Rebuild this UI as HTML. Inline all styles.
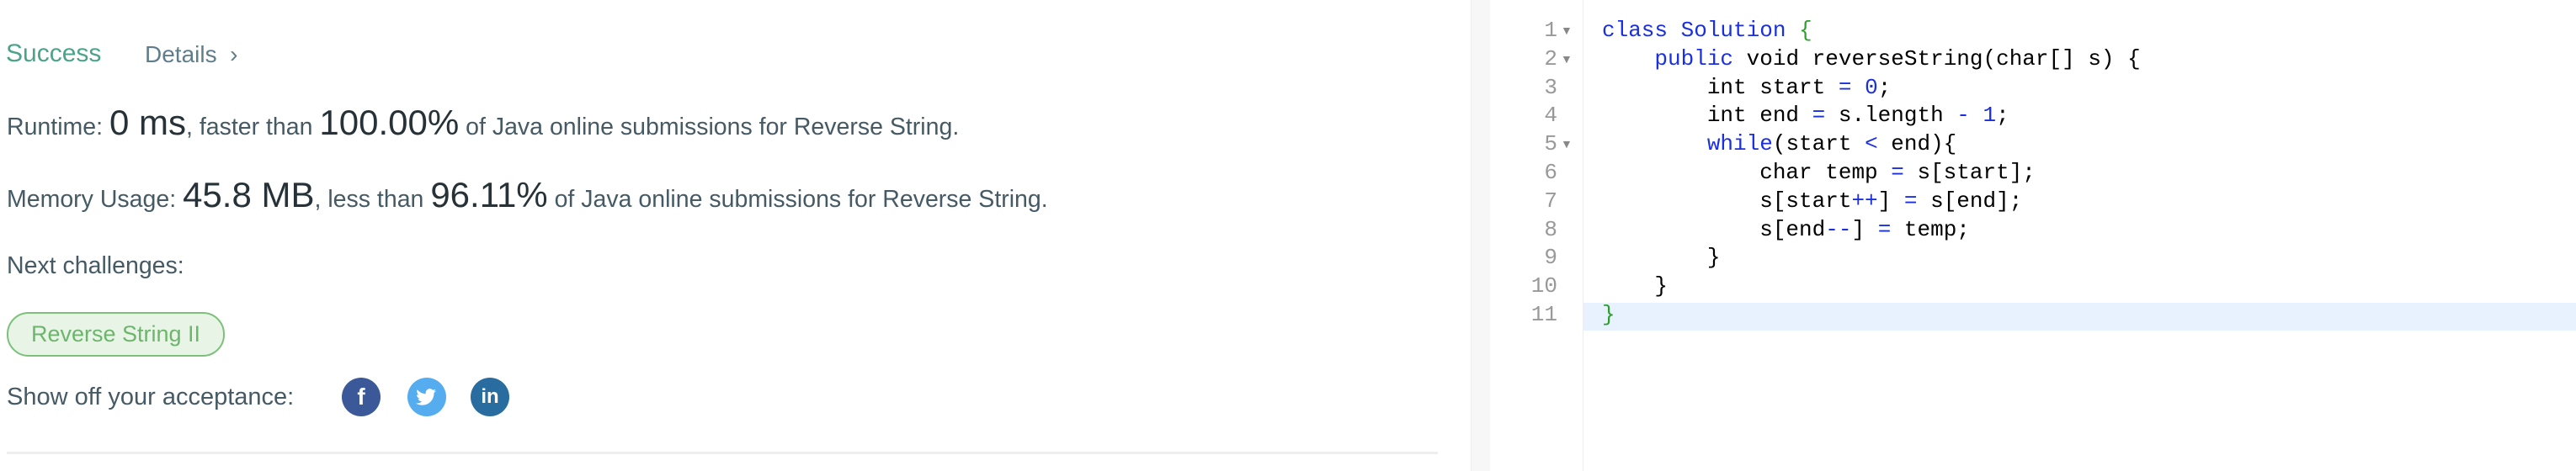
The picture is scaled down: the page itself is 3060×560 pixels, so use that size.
<!DOCTYPE html>
<html><head><style>
body{margin:0;width:3060px;height:560px;background:#fff;position:relative;overflow:hidden;font-family:"Liberation Sans",sans-serif;color:#455a64}
.a{position:absolute;white-space:nowrap}
.big{font-size:42px;color:#263238}
.code{position:absolute;font-family:"Liberation Mono",monospace;font-size:26px;line-height:33.8px;white-space:pre;color:#000}
.k{color:#1a2fe0}.g{color:#2ca02c}
.ln{position:absolute;font-family:"Liberation Mono",monospace;font-size:26px;line-height:33.8px;color:#999;text-align:right;width:80px}
.ico{position:absolute;width:46px;height:46px;border-radius:50%;color:#fff;font-weight:bold;text-align:center;line-height:46px;font-size:28px}
</style></head><body>
<div class="a" style="left:7px;top:47px;font-size:30px;color:#4ca38a">Success</div>
<div class="a" style="left:172px;top:49px;font-size:28px;color:#607d8b">Details &nbsp;›</div>
<div class="a" style="left:8px;top:122px;font-size:28.5px">Runtime: <span class="big">0 ms</span>, faster than <span class="big">100.00%</span> of Java online submissions for Reverse String.</div>
<div class="a" style="left:8px;top:208px;font-size:28.5px">Memory Usage: <span class="big">45.8 MB</span>, less than <span class="big">96.11%</span> of Java online submissions for Reverse String.</div>
<div class="a" style="left:8px;top:300px;font-size:28.5px">Next challenges:</div>
<div class="a" style="left:8px;top:371px;width:255px;height:49px;border:2px solid #7cc07c;border-radius:26px;background:#e8f5e6;color:#6db56d;font-size:27px;line-height:49px;text-align:center">Reverse String II</div>
<div class="a" style="left:8px;top:456px;font-size:29px">Show off your acceptance:</div>
<div class="ico" style="left:406px;top:449px;background:#3b5998">f</div>
<div class="ico" style="left:484px;top:449px;background:#55acee"><svg width="46" height="46" viewBox="0 0 46 46" style="display:block"><path fill="#fff" d="M34 15.5c-.9.4-1.8.6-2.8.8 1-.6 1.8-1.6 2.1-2.7-.9.6-2 1-3.1 1.2a4.9 4.9 0 0 0-8.4 4.5c-4.1-.2-7.7-2.2-10.1-5.1-1.3 2.300.4 5.1 1.5 6.500-.8 0-1.600-.2-2.200-.6 0 2.400 1.700 4.400 3.900 4.800-.7.200-1.500.200-2.200.1.600 2 2.400 3.400 4.600 3.400A9.900 9.900 0 0 1 10 30.500 14 14 0 0 0 17.500 32.700c9.100 0 14-7.500 14-14v-.6c1-.7 1.800-1.600 2.500-2.600z"/></svg></div>
<div class="ico" style="left:559px;top:449px;background:#286ca0;font-size:24px">in</div>
<div class="a" style="left:8px;top:537px;width:1700px;height:3px;background:#eee"></div>
<div class="a" style="left:1747px;top:0;width:22px;height:560px;background:#f7f7f7;border-left:1px solid #eee"></div>
<div class="a" style="left:1880px;top:0;width:1px;height:560px;background:#eee"></div>
<div class="a" style="left:1881px;top:360px;width:1179px;height:33px;background:#e8f2fe"></div>
<div class="ln" style="left:1770px;top:20px">1<br>2<br>3<br>4<br>5<br>6<br>7<br>8<br>9<br>10<br>11</div>
<div class="a" style="left:1854px;top:20px;font-size:14px;color:#888;line-height:33.8px">▼<br>▼<br><br><br>▼</div>
<div class="code" style="left:1903px;top:20px"><span class="k">class</span> <span class="k">Solution</span> <span class="g">{</span>
    <span class="k">public</span> void reverseString(char[] s) {
        int start <span class="k">=</span> <span class="k">0</span>;
        int end <span class="k">=</span> s.length <span class="k">-</span> <span class="k">1</span>;
        <span class="k">while</span>(start <span class="k">&lt;</span> end){
            char temp <span class="k">=</span> s[start];
            s[start<span class="k">++</span>] <span class="k">=</span> s[end];
            s[end<span class="k">--</span>] <span class="k">=</span> temp;
        }
    }
<span class="g">}</span></div>
</body></html>
